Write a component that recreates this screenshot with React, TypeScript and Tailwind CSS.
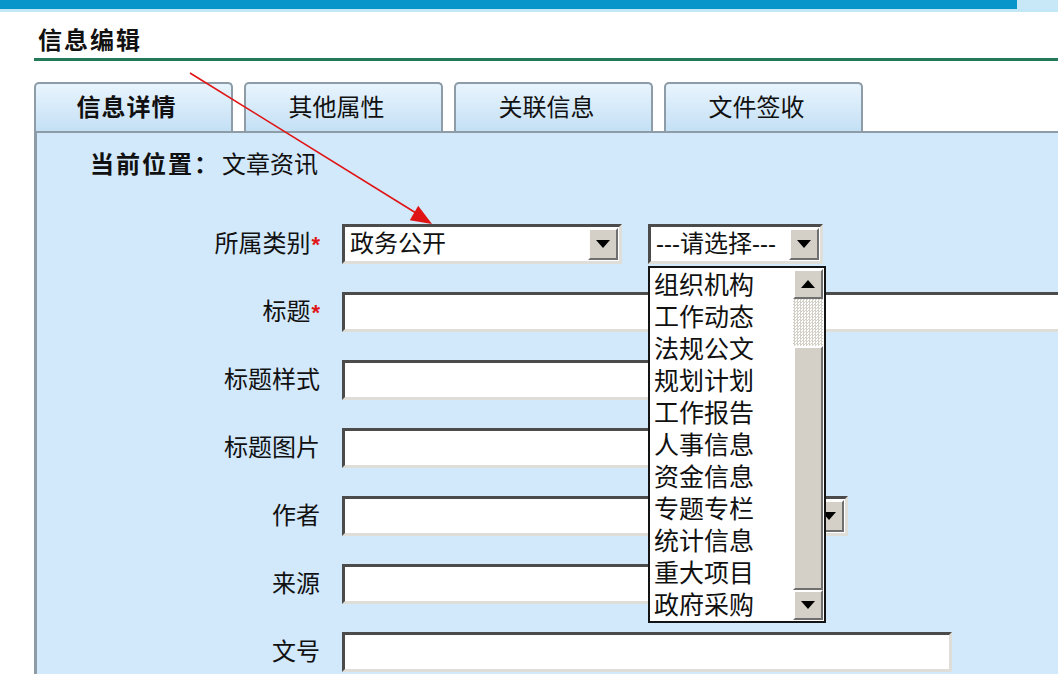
import React from 'react';

const tabs = ['信息详情', '其他属性', '关联信息', '文件签收'];

const categories = [
    '组织机构',
    '工作动态',
    '法规公文',
    '规划计划',
    '工作报告',
    '人事信息',
    '资金信息',
    '专题专栏',
    '统计信息',
    '重大项目',
    '政府采购',
];

const inset =
    'bg-white border-[3px] border-t-[#4b4b4b] border-l-[#4b4b4b] border-b-[#e0ded8] border-r-[#e0ded8]';

const Arrow = ({ up }: { up?: boolean }) => (
    <svg width="14" height="8" viewBox="0 0 14 8">
        {up ? <polygon points="0,8 14,8 7,0" fill="#000" /> : <polygon points="0,0 14,0 7,8" fill="#000" />}
    </svg>
);

const ScrollButton = ({ up }: { up?: boolean }) => (
    <div className="h-[30px] bg-[#d4d0c8] border-2 border-t-white border-l-white border-b-[#6f6f6f] border-r-[#6f6f6f] flex items-center justify-center">
        <Arrow up={up} />
    </div>
);

const Select = ({ width, value }: { width: string; value?: string }) => (
    <div className={`${width} h-[40px] flex ${inset}`}>
        <div className="flex-1 px-[5px] text-[24px] leading-[34px] text-[#111] whitespace-nowrap overflow-hidden">{value}</div>
        <div className="w-[30px] my-[1px] mr-[1px] bg-[#d4d0c8] border-2 border-t-white border-l-white border-b-[#6f6f6f] border-r-[#6f6f6f] flex items-center justify-center">
            <Arrow />
        </div>
    </div>
);

const Input = ({ width }: { width: string }) => <div className={`${width} h-[40px] ${inset}`} />;

const Label = ({ text, required }: { text: string; required?: boolean }) => (
    <div className="h-[40px] flex items-center justify-end text-[24px] text-[#111]">
        {text}
        {required && <span className="text-[#e01515] text-[22px] font-bold ml-[1px]">*</span>}
    </div>
);

export default function App() {
    return (
        <div className="relative w-[1058px] h-[674px] overflow-hidden bg-white flex flex-col font-['Liberation_Sans','Noto_Sans_CJK_SC',sans-serif]">
            {/* Top strip */}
            <div className="h-[9px] flex shrink-0">
                <div className="flex-1 bg-[#0895c9]" />
                <div className="w-[41px] bg-[#c9e8f7]" />
            </div>
            <div className="h-[3px] bg-[#c2e7f6] shrink-0" />

            {/* Page title */}
            <div className="pl-[38px] pt-[17px] text-[24px] leading-[24px] font-bold tracking-[2px] text-[#111] shrink-0">信息编辑</div>
            <div className="ml-[34px] mt-[5px] h-[3px] bg-[#237a58] shrink-0" />

            {/* Tabs */}
            <div className="ml-[34px] mt-[21px] flex gap-[11px] shrink-0">
                {tabs.map((tab, i) => (
                    <div
                        key={tab}
                        className={`w-[199px] h-[49px] rounded-t-[5px] border-2 border-b-0 border-[#8e9ca7] bg-linear-to-b from-[#e8f4fd] to-[#c4e0f5] flex items-center justify-center pr-[14px] text-[24px] text-[#111] ${i === 0 ? 'font-bold tracking-[1px]' : ''}`}
                    >
                        {tab}
                    </div>
                ))}
            </div>

            {/* Content panel */}
            <div className="ml-[34px] flex-1 bg-[#d2e8fb] border-l-[3px] border-t-2 border-[#8e9ca7]">
                <div className="pl-[53px] pt-[20px] text-[24px] leading-[24px] text-[#111]">
                    <span className="font-bold tracking-[2px]">当前位置：</span>
                    <span className="ml-[2px]">文章资讯</span>
                </div>

                <div className="mt-[47px] grid grid-cols-[283px_1fr] gap-x-[22px] gap-y-[28px]">
                    <Label text="所属类别" required />
                    <div className="relative z-10 flex gap-[26px]">
                        <Select width="w-[280px]" value="政务公开" />
                        <div className="relative">
                            <Select width="w-[175px]" value="---请选择---" />
                            {/* Open option list */}
                            <div className="absolute left-0 top-[42px] w-[178px] h-[357px] bg-white border-2 border-[#141414] flex">
                                <div className="flex-1 pl-[4px] pt-[1px]">
                                    {categories.map((c) => (
                                        <div key={c} className="h-[32px] text-[25px] leading-[32px] text-[#111] whitespace-nowrap">
                                            {c}
                                        </div>
                                    ))}
                                </div>
                                <div className="w-[30px] flex flex-col py-[1px] mr-[1px]">
                                    <ScrollButton up />
                                    <div className="h-[47px] bg-[repeating-conic-gradient(#d4d0c8_0_25%,#ffffff_0_50%)] bg-[length:3px_3px]" />
                                    <div className="flex-1 bg-[#d4d0c8] border-2 border-t-white border-l-white border-b-[#6f6f6f] border-r-[#6f6f6f]" />
                                    <ScrollButton />
                                </div>
                            </div>
                        </div>
                    </div>

                    <Label text="标题" required />
                    <Input width="w-[740px]" />

                    <Label text="标题样式" />
                    <Input width="w-[420px]" />

                    <Label text="标题图片" />
                    <Input width="w-[420px]" />

                    <Label text="作者" />
                    <Select width="w-[506px]" />

                    <Label text="来源" />
                    <Input width="w-[420px]" />

                    <Label text="文号" />
                    <Input width="w-[610px]" />
                </div>
            </div>

            {/* Red pointer arrow */}
            <svg className="absolute inset-0 pointer-events-none z-20" width="1058" height="674" viewBox="0 0 1058 674">
                <line x1="190" y1="73" x2="416" y2="213" stroke="#e01414" strokeWidth="1.6" />
                <polygon points="432,224 409.8,220.3 418.2,205.7" fill="#e01414" />
            </svg>
        </div>
    );
}
